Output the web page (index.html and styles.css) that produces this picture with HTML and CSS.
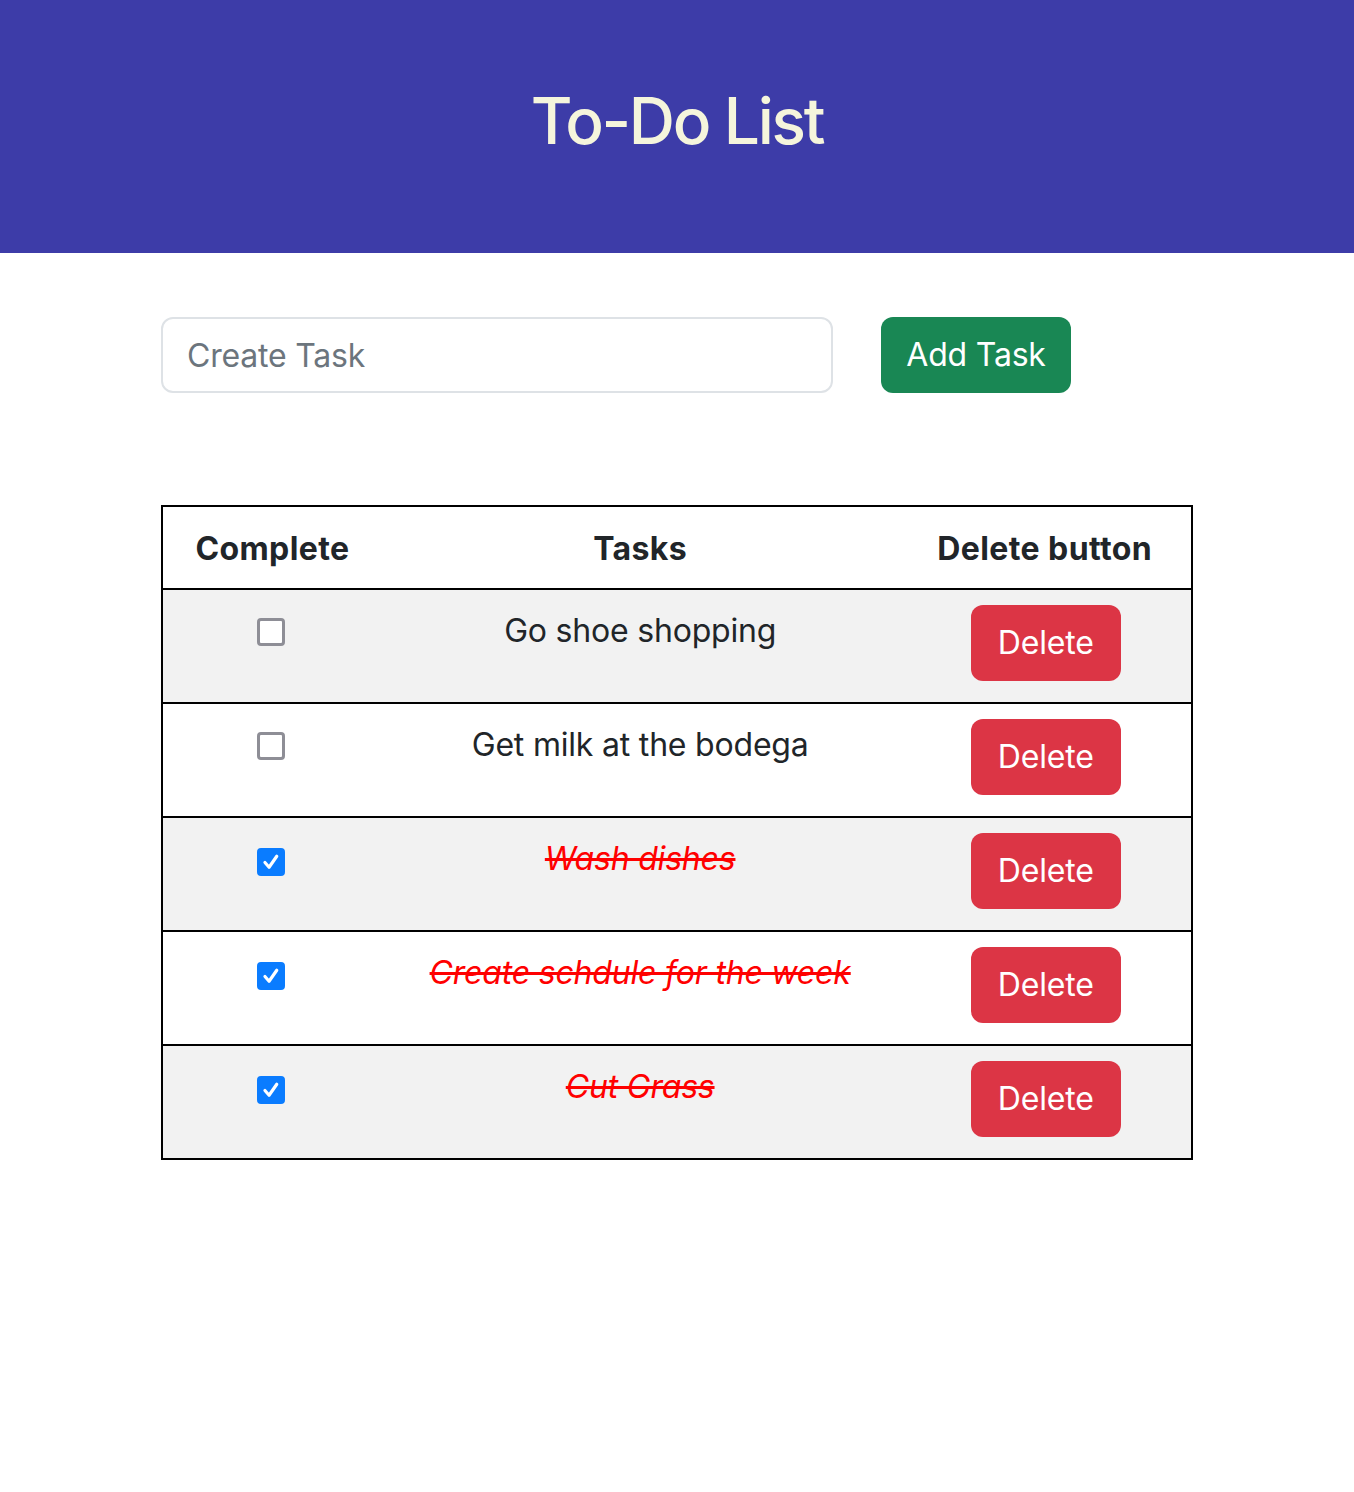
FILE: index.html
```html
<!DOCTYPE html>
<html>
<head>
<meta charset="utf-8">
<title>To-Do List</title>
<link rel="stylesheet" href="styles.css">
</head>
<body>
<header class="banner">
  <h1 class="title">To-Do List</h1>
</header>
<main class="content">
  <div class="create-row">
    <input class="task-input" type="text" placeholder="Create Task">
    <button class="btn btn-add">Add Task</button>
  </div>
  <table class="tasks">
    <thead>
      <tr>
        <th class="col-complete">Complete</th>
        <th class="col-task">Tasks</th>
        <th class="col-delete">Delete button</th>
      </tr>
    </thead>
    <tbody>
      <tr class="odd">
        <td class="cell-check"><span class="box"></span></td>
        <td class="cell-task">Go shoe shopping</td>
        <td class="cell-delete"><button class="btn btn-delete">Delete</button></td>
      </tr>
      <tr>
        <td class="cell-check"><span class="box"></span></td>
        <td class="cell-task">Get milk at the bodega</td>
        <td class="cell-delete"><button class="btn btn-delete">Delete</button></td>
      </tr>
      <tr class="odd">
        <td class="cell-check"><span class="box checked"><svg viewBox="0 0 16 16" width="24" height="24"><path d="M3.6 8.4 L6.6 11.8 L12.2 3.8" fill="none" stroke="#fff" stroke-width="2.3" stroke-linecap="round" stroke-linejoin="round"/></svg></span></td>
        <td class="cell-task done">Wash dishes</td>
        <td class="cell-delete"><button class="btn btn-delete">Delete</button></td>
      </tr>
      <tr>
        <td class="cell-check"><span class="box checked"><svg viewBox="0 0 16 16" width="24" height="24"><path d="M3.6 8.4 L6.6 11.8 L12.2 3.8" fill="none" stroke="#fff" stroke-width="2.3" stroke-linecap="round" stroke-linejoin="round"/></svg></span></td>
        <td class="cell-task done">Create schdule for the week</td>
        <td class="cell-delete"><button class="btn btn-delete">Delete</button></td>
      </tr>
      <tr class="odd">
        <td class="cell-check"><span class="box checked"><svg viewBox="0 0 16 16" width="24" height="24"><path d="M3.6 8.4 L6.6 11.8 L12.2 3.8" fill="none" stroke="#fff" stroke-width="2.3" stroke-linecap="round" stroke-linejoin="round"/></svg></span></td>
        <td class="cell-task done">Cut Grass</td>
        <td class="cell-delete"><button class="btn btn-delete">Delete</button></td>
      </tr>
    </tbody>
  </table>
</main>
</body>
</html>
```

FILE: styles.css
```css
* { box-sizing: border-box; }
html, body { margin: 0; padding: 0; background: #fff; }
body {
  font-family: Inter, "Noto Sans", "Liberation Sans", sans-serif;
  color: #212529;
  font-size: 32px;
  line-height: 1.5;
}
.banner {
  background: #3d3ca8;
  height: 253px;
  display: flex;
  justify-content: center;
  padding-top: 83px;
}
.title {
  margin: 0;
  color: #f5f5dc;
  font-size: 64px;
  font-weight: 500;
  line-height: 1.2;
  letter-spacing: -2.3px;
}
.content {
  width: 1032px;
  margin: 0 auto;
}
.create-row {
  display: flex;
  gap: 48px;
  margin-top: 64px;
  margin-bottom: 112px;
}
.task-input {
  width: 672px;
  height: 76px;
  border: 2px solid #dee2e6;
  border-radius: 12px;
  padding: 12px 24px;
  font-family: inherit;
  font-size: 32px;
  color: #212529;
  outline: none;
  letter-spacing: -0.2px;
}
.task-input::placeholder { color: #6c757d; opacity: 1; }
.btn {
  font-family: inherit;
  font-size: 32px;
  line-height: 48px;
  border: none;
  border-radius: 12px;
  color: #fff;
  padding: 12px 24px;
  cursor: pointer;
  letter-spacing: -0.2px;
}
.btn-add {
  background: #198754;
  width: 190px;
  height: 76px;
}
.tasks {
  width: 1032px;
  border-collapse: collapse;
  border: 2px solid #000;
}
.tasks tr { border-bottom: 2px solid #000; }
.tasks th {
  font-weight: 700;
  padding: 18px 16px 15px;
  text-align: center;
  letter-spacing: 0.4px;
}
.col-complete { width: 220px; }
.col-task { width: 518px; }
.col-delete { width: 294px; }
.tasks td {
  padding: 15px 16px 21px;
  text-align: center;
  vertical-align: top;
}
.odd { background: #f2f2f2; }
.cell-check { line-height: 48px; }
.box {
  display: inline-flex;
  align-items: center;
  justify-content: center;
  width: 28px;
  height: 28px;
  border: 3px solid #8e8e96;
  border-radius: 4px;
  background: #fff;
  vertical-align: -6px;
  margin-left: -2px;
}
.box.checked {
  background: #0a7cff;
  border-color: #0a7cff;
}
.cell-task { padding-top: 17px !important; letter-spacing: -0.2px; }
.done {
  color: #ff0000;
  font-style: italic;
  text-decoration: line-through;
}
.btn-delete {
  background: #dc3545;
  width: 150px;
  height: 76px;
  display: block;
  margin: 0 auto;
  transform: translateX(1px);
}
```
